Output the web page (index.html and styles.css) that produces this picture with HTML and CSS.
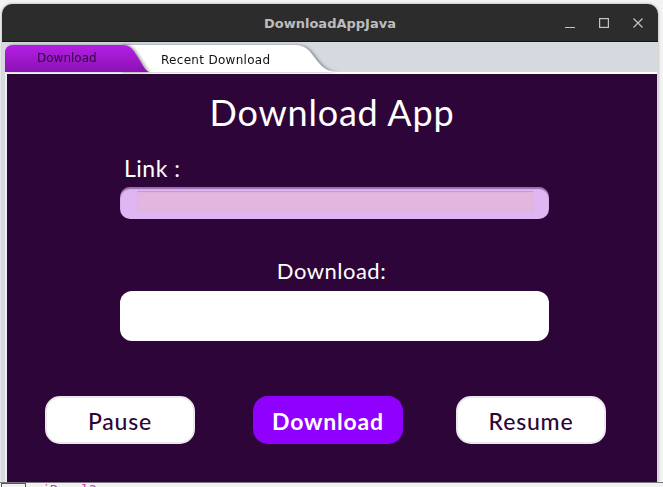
FILE: index.html
```html
<!DOCTYPE html>
<html>
<head>
<meta charset="utf-8">
<link rel="stylesheet" href="styles.css">
</head>
<body>
<div class="desktop">
  <div class="window">
    <div class="titlebar">
      <span></span>
      <span class="title">DownloadAppJava</span>
      <div class="controls">
        <svg class="ctl" width="10" height="10" viewBox="0 0 10 10"><path d="M0 9.5H10" stroke="#c4c4c4" stroke-width="1.2"/></svg>
        <svg class="ctl" width="10" height="10" viewBox="0 0 10 10"><rect x="0.6" y="0.6" width="8.8" height="8.8" fill="none" stroke="#c4c4c4" stroke-width="1.2"/></svg>
        <svg class="ctl" width="10" height="10" viewBox="0 0 10 10"><path d="M0.5 0.5L9.5 9.5M9.5 0.5L0.5 9.5" stroke="#c4c4c4" stroke-width="1.2"/></svg>
      </div>
    </div>
    <div class="frame">
      <div class="tabs">
        <div class="tab-wrap tab-wrap-active">
          <div class="tab tab-active">Download</div>
        </div>
        <div class="tab-wrap tab-wrap-recent">
          <div class="tab tab-recent">Recent Download</div>
        </div>
      </div>
      <div class="panel">
        <h1 class="heading">Download App</h1>
        <div class="form">
          <label class="label label-link">Link :</label>
          <div class="input input-link"><div class="input-inner"></div></div>
          <label class="label label-dl">Download:</label>
          <div class="input input-dl"></div>
        </div>
        <div class="buttons">
          <button class="btn btn-light">Pause</button>
          <button class="btn btn-primary">Download</button>
          <button class="btn btn-light">Resume</button>
        </div>
      </div>
    </div>
  </div>
  <div class="ide-strip"><span class="ide-box"></span><span class="ide-text">jPanel2;</span></div>
</div>
</body>
</html>
```
FILE: styles.css
```css
* { box-sizing: border-box; margin: 0; padding: 0; }
html, body { width: 663px; height: 487px; overflow: hidden; }
body { background: #f3f3f3; font-family: "Lato", "Open Sans", sans-serif; }

.desktop { display: flex; flex-direction: column; height: 487px; padding-top: 4px; padding-left: 2px; }

.window { width: 656px; border-radius: 10px 10px 0 0; overflow: hidden; background: #d6d9e0; box-shadow: 0 0 3px rgba(0,0,0,0.35); }

.titlebar {
  height: 38px;
  background: #2c2c2c;
  border-bottom: 1px solid #141414;
  display: grid;
  grid-template-columns: 1fr auto 1fr;
  align-items: center;
}
.title { font-family: "DejaVu Sans", sans-serif; font-weight: bold; font-size: 13px; color: #bdbdbd; padding-top: 1px; }
.controls { justify-self: end; display: flex; align-items: center; gap: 24px; padding-right: 15px; padding-top: 1px; }
.ctl { display: block; }

.frame { display: flex; flex-direction: column; }
.tabs { height: 30px; padding-top: 3px; padding-left: 3px; display: flex; }
.tab-wrap { height: 27px; }
.tab-wrap-active { position: relative; z-index: 2; filter: drop-shadow(2px 0 1.5px rgba(0,0,0,0.35)); }
.tab-wrap-recent { margin-left: -30px; filter: drop-shadow(2px 0 1.5px rgba(0,0,0,0.35)); }
.tab {
  height: 27px;
  font-family: "DejaVu Sans", sans-serif;
  font-size: 12px;
  display: flex;
  align-items: center;
}
.tab-active {
  width: 145px;
  padding-left: 32px;
  padding-bottom: 2px;
  color: #33083f;
  background: linear-gradient(#b41fe6, #8a12b2);
  clip-path: path("M0 27 L0 8 Q0 0 8 0 L118 0 C126 0 129 6 134 14 C139 22 141 27 145 27 Z");
}
.tab-recent {
  width: 218px;
  padding-left: 41px;
  padding-top: 2px;
  color: #111;
  background: #ffffff;
  letter-spacing: 0.3px;
  clip-path: path("M0 27 L0 0 L175 0 C185 0 189 5 195 13 C201 21 206 27 218 27 Z");
}

.panel {
  margin-left: 3px;
  margin-right: 1px;
  height: 410px;
  background: #2e0538;
  border-top: 2px solid #ffffff;
  border-left: 2px solid #eceef2;
  display: flex;
  flex-direction: column;
}

.heading {
  margin-top: 20px;
  text-align: center;
  font-weight: 400;
  font-size: 36px;
  line-height: 36px;
  color: #ffffff;
  letter-spacing: 0.8px;
}

.form { margin-left: 113px; width: 429px; display: flex; flex-direction: column; }
.label { color: #ffffff; font-size: 23px; line-height: 23px; letter-spacing: 0.5px; }
.label-link { margin-top: 27px; margin-left: 4px; }
.label-dl { margin-top: 41px; font-size: 22px; line-height: 22px; text-align: center; padding-right: 6px; }

.input { border-radius: 10px; }
.input-link {
  margin-top: 7px;
  height: 32px;
  background: #dfb6f1;
  box-shadow: inset 0 2px 1px rgba(70,20,90,0.45);
  padding: 4px 16px 7px 17px;
}
.input-inner { height: 100%; background: #e2b6df; box-shadow: inset 0 1px 1px rgba(120,60,130,0.25); }
.input-dl { margin-top: 9px; height: 50px; background: #ffffff; border-radius: 12px; }

.buttons { margin-top: 55px; padding-left: 38px; display: flex; gap: 58px; }
.btn {
  width: 150px;
  height: 48px;
  border-radius: 15px;
  font-family: "Lato", "Open Sans", sans-serif;
  font-size: 23px;
  letter-spacing: 0.8px;
  display: flex;
  align-items: center;
  justify-content: center;
  padding-top: 2px;
}
.btn-light { background: #ffffff; border: 2px solid #ebe9ec; color: #2e0538; font-weight: 500; }
.btn-primary { background: #9000fe; border: none; color: #ffffff; font-weight: 700; width: 150px; }
.buttons .btn:nth-child(3) { margin-left: -5px; }

.ide-strip { flex: 1; border-top: 1px solid #7a7a7a; background: #f2f2f2; display: flex; align-items: flex-start; overflow: hidden; margin-left: -2px; }
.ide-box { width: 25px; height: 8px; border: 1px solid #555; margin-left: 1px; }
.ide-text { font-family: "DejaVu Sans Mono", monospace; font-size: 13px; line-height: 13px; color: #c040c0; margin-left: 16px; margin-top: 0; }
```
